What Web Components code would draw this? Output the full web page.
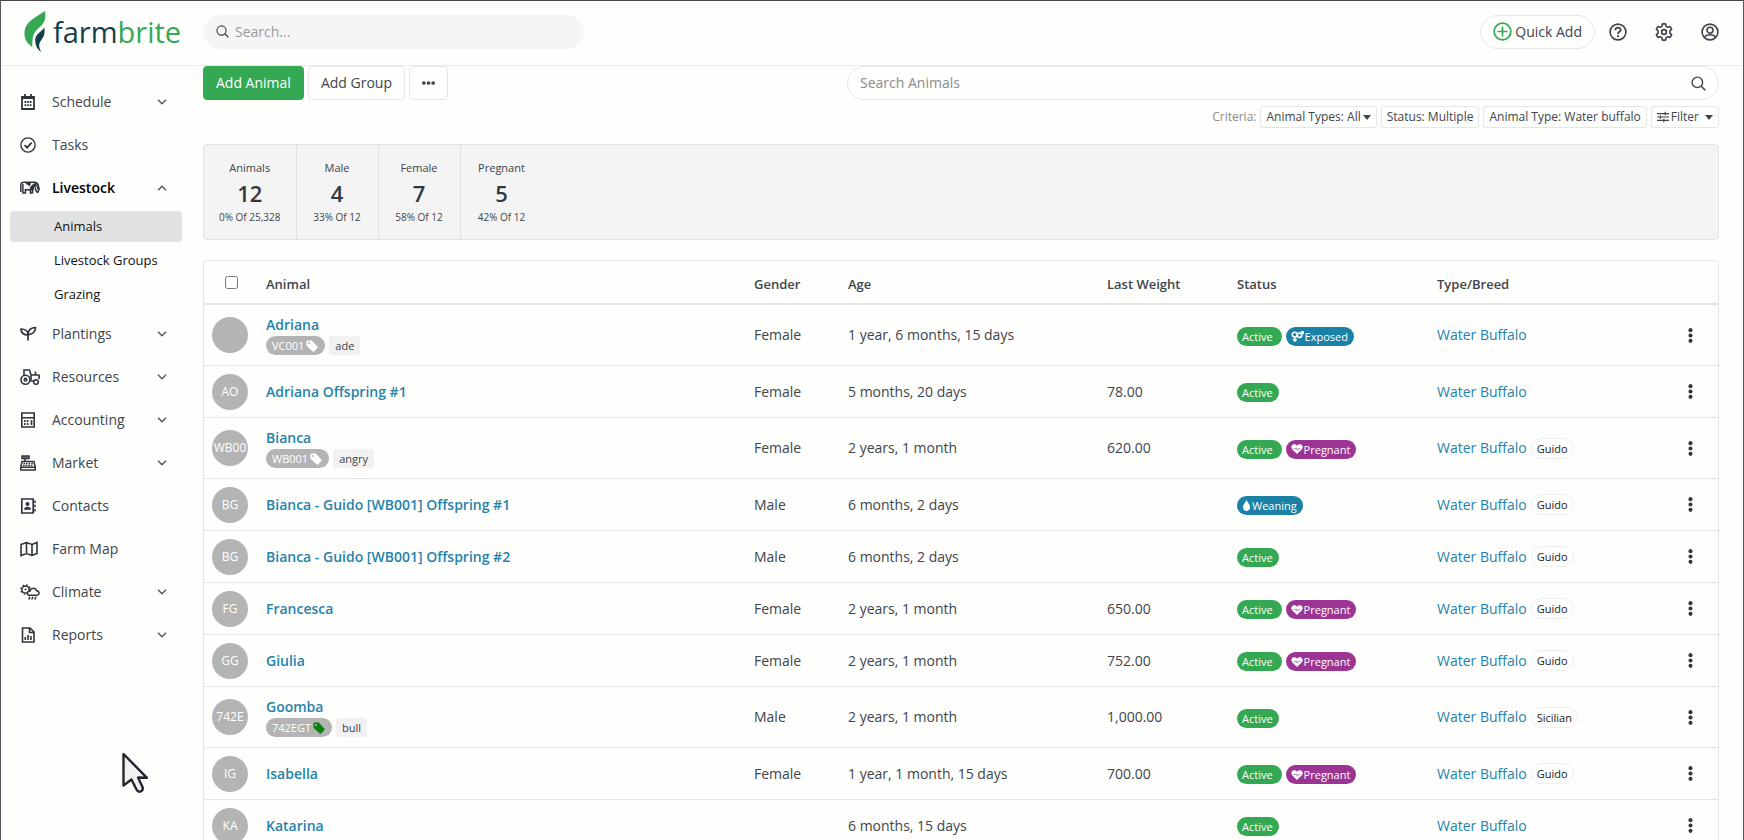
<!DOCTYPE html>
<html lang="en">
<head>
<meta charset="utf-8">
<title>Animals - Farmbrite</title>
<style>
  body { margin: 0; font: 14px/20px "Open Sans", "Noto Sans", sans-serif; color: #40454c; background: #fefefd; }
</style>
</head>
<body>
<farm-app></farm-app>
<script>
const ICONS = {
  search: ['0 0 16 16', '<g fill="none" stroke="currentColor"><circle cx="6.8" cy="6.8" r="5.6" stroke-width="1.5"/><path d="M10.9 10.900l4.300 4.300" stroke-width="1.700"/></g>'],
  plus: ['0 0 20 20', '<g fill="none" stroke="currentColor" stroke-width="1.8" stroke-linecap="round"><circle cx="10" cy="10" r="8.8"/><path d="M10 5.6v8.8M5.6 10h8.8"/></g>'],
  help: ['0 0 20 20', '<g fill="none" stroke="currentColor" stroke-width="1.8"><circle cx="10" cy="10" r="8.8"/><path d="M7 8c0-3.7 6-3.7 6-.2 0 2.100-3 2-3 4.300" stroke-width="2"/></g><circle cx="10" cy="14.600" r="1.200" fill="currentColor"/>'],
  gear: ['0 0 20 20', '<g fill="none" stroke="currentColor" stroke-width="1.800" stroke-linejoin="round"><path d="M8.200 1h3.600l.6 2.700 1.700 1 2.600-.8 1.800 3.100-2 1.900v2.200l2 1.900-1.800 3.100-2.600-.8-1.700 1-.6 2.700H8.200l-.6-2.700-1.700-1-2.600.8-1.800-3.100 2-1.900V8.900l-2-1.900 1.800-3.100 2.600.8 1.700-1z"/><circle cx="10" cy="10" r="2.700"/></g>'],
  user: ['0 0 20 20', '<g fill="none" stroke="currentColor" stroke-width="1.800"><circle cx="10" cy="10" r="8.800"/><circle cx="10" cy="8" r="3.300"/><path d="M4 16c1-2.300 3-3 6-3s5 .7 6 3"/></g>'],
  down: ['0 0 10 6', '<path d="M1 .8l4 4 4-4" fill="none" stroke="currentColor" stroke-width="1.400"/>'],
  up: ['0 0 10 6', '<path d="M1 5.200l4-4 4 4" fill="none" stroke="currentColor" stroke-width="1.400"/>'],
  caret: ['0 0 8 5', '<path d="M0 0h8L4 5z" fill="currentColor"/>'],
  sliders: ['0 0 14 12', '<path d="M0 2h14M0 6h14M0 10h14M9.500 0v4M4 4v4M8 8v4" fill="none" stroke="currentColor" stroke-width="1.300"/>'],
  dots: ['0 0 14 4', '<g fill="currentColor"><circle cx="2" cy="2" r="2"/><circle cx="7" cy="2" r="2"/><circle cx="12" cy="2" r="2"/></g>'],
  kebab: ['0 0 4 14', '<g fill="currentColor"><circle cx="2" cy="2" r="1.900"/><circle cx="2" cy="7" r="1.900"/><circle cx="2" cy="12" r="1.900"/></g>'],
  tag: ['0 0 12 12', '<path d="M.5 1.500v4.300L6.700 11.600c.4.4.9.4 1.300 0l3.500-3.500c.4-.4.4-.9 0-1.300L5.800.5H1.500z" fill="currentColor"/><circle cx="3" cy="3" r="1" fill="#b4b4b4"/>'],
  mates: ['0 0 14 12', '<g fill="none" stroke="currentColor" stroke-width="1.700"><circle cx="4" cy="4" r="2.700"/><circle cx="9.200" cy="4.700" r="2.400"/><path d="M4 6.700V12M1.800 9.600h4.400M11 3l2-2M10.500.9H13.200V3.500"/></g>'],
  heart: ['0 0 14 12', '<path d="M7 12L1.200 6.200C-2 2.500 3-2 7 2c4-4 9 .5 5.800 4.200z" fill="currentColor"/><path d="M3 5.500h2l1-1 1.500 3 1.200-2h2" fill="none" stroke="#9c3494" stroke-width=".8"/>'],
  drop: ['0 0 10 12', '<path d="M5 0c1 3 4 4.800 4 7.800C9 10.300 7.200 12 5 12S1 10.300 1 7.800C1 4.800 4 3 5 0z" fill="currentColor"/>'],
  schedule: ['0 0 20 16', '<path d="M2 3h12v12H2zM2 4h12M5 0v3M11 0v3" fill="none" stroke="currentColor" stroke-width="1.800"/><path d="M4.500 8h7M4.500 11.200h7" stroke="currentColor" stroke-width="1.800" stroke-dasharray="1.700 .95"/>'],
  tasks: ['0 0 20 16', '<g fill="none" stroke="currentColor"><circle cx="8" cy="8" r="7.100" stroke-width="1.400"/><path d="M4.600 8.200l2.500 2.500L11.700 5.500" stroke-width="1.800"/></g>'],
  livestock: ['0 0 20 16', '<path d="M.8 12V5.500C.8 3.500 2 2.300 4 2.300h10.500c2 0 3.300 1.200 3.800 3.200l1 4.500M2.900 4v9h2.500V9.800h5V13h2V9" fill="none" stroke="currentColor" stroke-width="1.500"/><path d="M5.500 2.500c.5 2.500 2 1.500 3 3s2 .5 2.500-3zM9.500 8l2.500-3 3.500-2.500L19.500 9.500 18.800 12.500 17 13.200 15 10.500 14.500 6.500 13 12z" fill="currentColor"/><path d="M15.800 6l1.700 5" stroke="#fefefd" stroke-width="1"/>'],
  plantings: ['0 0 20 16', '<path d="M8 14.500V8.500C8 5 5 3 1 3c0 4 3 6 7 6M8 8.500C8 4 11 1.500 15.500 1.500 15.500 6 12 8.300 8.300 8.600" fill="none" stroke="currentColor" stroke-width="1.700"/>'],
  resources: ['0 0 20 16', '<g fill="none" stroke="currentColor" stroke-width="1.600"><circle cx="5.500" cy="10.700" r="4.500"/><circle cx="5.500" cy="10.700" r="1.300"/><circle cx="16" cy="13" r="2.300"/><path d="M4 6V1h5.500l1.500 5h7.500q1 0 .8 1.500L18.800 10M10.500 12h3.200M11 6v5M15.500 6V2.500"/></g>'],
  accounting: ['0 0 20 16', '<path d="M1.800 1h12.400v14H1.800zM2 5.700h12" fill="none" stroke="currentColor" stroke-width="1.600"/><path d="M4 9h5.500M4 12h5.500" stroke="currentColor" stroke-width="1.800" stroke-dasharray="1.600 1.200"/><path d="M11.500 8.200v4.700" stroke="currentColor" stroke-width="1.800"/>'],
  market: ['0 0 20 16', '<path d="M2 1h7v2.500H2zM5 4v2M2 6.500h12l1.200 5.500v3H.8v-3zM1 12.200h14" fill="none" stroke="currentColor" stroke-width="1.500"/><path d="M2 1h7v2.500H2z" fill="currentColor" opacity=".6"/><path d="M3.500 8.500h9.500M3 10.500h10" stroke="currentColor" stroke-width="1.300" stroke-dasharray="1.600 1"/>'],
  contacts: ['0 0 20 16', '<path d="M1.800 1h11.400v14H1.800z" fill="none" stroke="currentColor" stroke-width="1.700"/><path d="M15 2.500v2.500M15 6.800v2.500M15 11v2.500" stroke="currentColor" stroke-width="1.500"/><circle cx="7.500" cy="6" r="2" fill="currentColor"/><path d="M4 11.700c0-3.800 7-3.800 7 0z" fill="currentColor"/>'],
  map: ['0 0 20 16', '<path d="M1 3.500l5.500-2 5.500 2 5-2v11l-5 2-5.500-2-5.500 2zM6.500 1.700v11M12 3.500v11" fill="none" stroke="currentColor" stroke-width="1.600"/>'],
  climate: ['0 0 20 16', '<g fill="none" stroke="currentColor" stroke-width="1.500"><circle cx="5.500" cy="5.500" r="3.600"/><circle cx="5.500" cy="5.500" r="4.700" stroke-width="1.300" stroke-dasharray="1.700 1.990"/><path d="M9 11.300c-2.500-1-2-4 .8-4C10.500 3.500 15.500 3.500 16.500 6.700c3.200.3 3.500 4 .5 4.600z" fill="#fefefd"/><path d="M10 12.700l-1.300 2.800M13 12.700l-1.300 2.800M16 12.700l-1.300 2.800"/></g><circle cx="5.500" cy="5.500" r="1" fill="currentColor"/>'],
  reports: ['0 0 20 16', '<path d="M2.500 1h7.500l4 4v10H2.500zM9.500 1v4.500H14" fill="none" stroke="currentColor" stroke-width="1.600"/><path d="M5.300 10v3M8.100 8v5M10.900 9v4" stroke="currentColor" stroke-width="1.600"/>']
};
const icon = (name, w, h) => `<svg viewBox="${ICONS[name][0]}" width="${w}" height="${h}" aria-hidden="true">${ICONS[name][1]}</svg>`;

const BASE = `
  *, *::before { box-sizing: border-box; }
  svg { display: block; flex: none; }
  button, input { font: inherit; color: inherit; margin: 0; }
  button { cursor: pointer; }
  a { text-decoration: none; color: inherit; }
`;
const define = (name, css, markup) => customElements.define(name, class extends HTMLElement {
  connectedCallback() {
    if (this.shadowRoot) return;
    this.attachShadow({ mode: 'open' }).innerHTML =
      `<style>${BASE}${css}</style>${typeof markup === 'function' ? markup(this) : markup}`;
  }
});

define('farm-logo', `
  :host { display: block; }
  a { display: flex; align-items: center; gap: 7px; font-size: 29px; line-height: 40px; font-weight: 500; color: #143f4b; }
  b { font-weight: 500; color: #34a853; }
`, `<a href="#" aria-label="farmbrite home">
  <svg viewBox="0 0 22 42" width="22" height="42"><path d="M21 0C22 7 21 11 17 15 11 20 9 23 8.500 29l-.3 7C3 32 0 28 .5 21 1 11 12 6 21 0z" fill="#34a853"/><path d="M20.300 16.500c1 7-1 10-3.300 13-2.500 3.500-2.500 7 .5 11.500-4-2.500-6-6-6.300-11.500C11 23 17 21.500 20.300 16.500z" fill="#143f4b"/></svg>
  <span>farm<b>brite</b></span></a>`);

define('farm-header', `
  :host { display: flex; align-items: center; height: 65px; padding: 0 24px 3px 23px; border-bottom: 1px solid #ececf0; flex: none; }
  farm-logo { width: 180px; }
  .search { display: flex; align-items: center; gap: 6px; width: 380px; height: 34px; padding: 0 12px; border-radius: 17px; background: #f5f5f5; }
  .search input { flex: 1; min-width: 0; border: 0; outline: 0; background: none; padding: 0; }
  input::placeholder { color: #9b9b9b; opacity: 1; }
  nav { display: flex; align-items: center; margin-left: auto; gap: 28px; }
  nav button { border: 0; background: none; padding: 0; }
  nav .quick { display: flex; align-items: center; gap: 3px; height: 34px; padding: 0 12px; border: 1px solid #e8e8ec; border-radius: 17px; margin-right: -14px; }
  .quick svg { color: #34a853; }
`, `<farm-logo></farm-logo>
  <label class="search">${icon('search', 13, 13)}<input type="search" placeholder="Search..." aria-label="Search"></label>
  <nav>
    <button class="quick">${icon('plus', 19, 19)}Quick Add</button>
    <button aria-label="Help">${icon('help', 18, 18)}</button>
    <button aria-label="Settings">${icon('gear', 18, 18)}</button>
    <button aria-label="Account">${icon('user', 18, 18)}</button>
  </nav>`);

define('farm-nav-item', `
  :host { display: block; }
  a { display: flex; align-items: center; height: 43px; padding: 0 15px 0 10px; }
  .label { flex: 1; margin-left: 12px; }
  a > svg { color: #2f343c; }
  :host([open]) a { color: #000; font-weight: 600; }
  .chev { color: #555; }
`, el => `<a href="#">${icon(el.getAttribute('icon'), 20, 16)}<span class="label"><slot></slot></span>${
    el.hasAttribute('menu') ? `<span class="chev">${icon(el.hasAttribute('open') ? 'up' : 'down', 10, 6)}</span>` : ''}</a>`);

define('farm-nav-sub', `
  :host { display: block; }
  a { display: block; padding: 5px 0 5px 44px; line-height: 21px; font-size: 13px; color: #111; border-radius: 4px; }
  :host([current]) a { background: #e2e2e2; }
`, `<a href="#"><slot></slot></a>`);

define('farm-sidebar', `
  :host { display: block; width: 192px; flex: none; padding: 14px 11px 0 9px; }
  .subs { display: grid; gap: 3px; padding: 2px 0; }
`, `<nav>
  <farm-nav-item icon="schedule" menu>Schedule</farm-nav-item>
  <farm-nav-item icon="tasks">Tasks</farm-nav-item>
  <farm-nav-item icon="livestock" menu open>Livestock</farm-nav-item>
  <div class="subs">
    <farm-nav-sub current>Animals</farm-nav-sub>
    <farm-nav-sub>Livestock Groups</farm-nav-sub>
    <farm-nav-sub>Grazing</farm-nav-sub>
  </div>
  <farm-nav-item icon="plantings" menu>Plantings</farm-nav-item>
  <farm-nav-item icon="resources" menu>Resources</farm-nav-item>
  <farm-nav-item icon="accounting" menu>Accounting</farm-nav-item>
  <farm-nav-item icon="market" menu>Market</farm-nav-item>
  <farm-nav-item icon="contacts">Contacts</farm-nav-item>
  <farm-nav-item icon="map">Farm Map</farm-nav-item>
  <farm-nav-item icon="climate" menu>Climate</farm-nav-item>
  <farm-nav-item icon="reports" menu>Reports</farm-nav-item>
</nav>`);

define('farm-toolbar', `
  :host { display: flex; justify-content: space-between; align-items: flex-start; }
  .actions { display: flex; gap: 4px; }
  button { display: flex; align-items: center; height: 34px; padding: 0 12px; border: 1px solid #e6e6ea; border-radius: 4px; background: #fefefd; }
  .primary { background: #34a853; border-color: #34a853; color: #fff; }
  .find { width: 872px; max-width: 58%; }
  .box { display: flex; align-items: center; height: 34px; padding: 0 12px; border: 1px solid #e6e6ea; border-radius: 17px; }
  .box input { flex: 1; min-width: 0; border: 0; outline: 0; background: none; padding: 0; }
  input::placeholder { color: #8c8c8c; opacity: 1; }
  .criteria { display: flex; justify-content: flex-end; align-items: center; gap: 4px; margin-top: 6px; font-size: 12px; color: #8a8a8a; }
  .criteria button { height: 22px; padding: 0 5px; gap: 2px; border-radius: 3px; color: #40454c; white-space: nowrap; }
  .criteria .filter { gap: 6px; }
  .filter span { display: flex; align-items: center; gap: 2px; }
`, `<div class="actions">
    <button class="primary">Add Animal</button>
    <button>Add Group</button>
    <button aria-label="More actions">${icon('dots', 13, 4)}</button>
  </div>
  <div class="find">
    <label class="box"><input type="search" placeholder="Search Animals" aria-label="Search Animals">${icon('search', 15, 15)}</label>
    <div class="criteria"><span>Criteria:</span>
      <button>Animal Types: All ${icon('caret', 8, 5)}</button>
      <button>Status: Multiple</button>
      <button>Animal Type: Water buffalo</button>
      <button class="filter"><span>${icon('sliders', 12, 12)}Filter</span>${icon('caret', 8, 5)}</button>
    </div>
  </div>`);

define('farm-stat', `
  :host { display: flex; flex-direction: column; align-items: center; padding: 13px 15px 0; min-width: 82px; border-right: 1px solid #e2e2e4; font-size: 11px; white-space: nowrap; }
  :host(:last-child) { border-right: 0; }
  strong { font-size: 22px; line-height: 30px; font-weight: 600; color: #33383e; }
  small { font-size: 10px; line-height: 18px; }
`, el => `<span><slot></slot></span><strong>${el.getAttribute('value')}</strong><small>${el.getAttribute('share')}</small>`);

define('farm-stats', `
  :host { display: flex; height: 96px; margin: 16px 0 20px; background: #f4f4f4; border: 1px solid #e2e2e4; border-radius: 4px; }
`, `<slot></slot>`);

define('farm-badge', `
  :host { display: inline-flex; align-items: center; gap: 1px; height: 19px; padding: 0 6px 0 5px; border-radius: 10px; background: #34a853; color: #fff; font-size: 11px; line-height: 19px; white-space: nowrap; }
  :host([kind=active]:not(:last-child)) { padding-right: 9px; }
  :host([kind=exposed]), :host([kind=weaning]) { background: #1b82a6; }
  :host([kind=pregnant]) { background: #9c3494; }
  :host([kind=tag]) { background: #b4b4b4; padding: 0 7px 0 6px; gap: 2px; }
  :host([kind=tag]) svg { color: var(--tag-color, #fff); }
  :host([kind=note]) { background: #f1f1f1; color: #40454c; border-radius: 3px; padding: 0 6px; }
  :host([kind=breed]) { background: none; color: #222; border: 1px solid #efeff3; padding: 0 5px; height: 21px; }
`, el => {
  const k = el.getAttribute('kind');
  const lead = { exposed: icon('mates', 13, 11), pregnant: icon('heart', 12, 10), weaning: icon('drop', 9, 11) }[k] || '';
  return `${lead}<slot></slot>${k === 'tag' ? icon('tag', 12, 12) : ''}`;
});

const ANIMALS = [
  { av: '', name: 'Adriana', tag: 'VC001', note: 'ade', sex: 'Female', age: '1 year, 6 months, 15 days', kg: '', st: ['Active', 'Exposed'] },
  { av: 'AO', name: 'Adriana Offspring #1', sex: 'Female', age: '5 months, 20 days', kg: '78.00', st: ['Active'] },
  { av: 'WB00', name: 'Bianca', tag: 'WB001', note: 'angry', sex: 'Female', age: '2 years, 1 month', kg: '620.00', st: ['Active', 'Pregnant'], breed: 'Guido' },
  { av: 'BG', name: 'Bianca - Guido [WB001] Offspring #1', sex: 'Male', age: '6 months, 2 days', kg: '', st: ['Weaning'], breed: 'Guido' },
  { av: 'BG', name: 'Bianca - Guido [WB001] Offspring #2', sex: 'Male', age: '6 months, 2 days', kg: '', st: ['Active'], breed: 'Guido' },
  { av: 'FG', name: 'Francesca', sex: 'Female', age: '2 years, 1 month', kg: '650.00', st: ['Active', 'Pregnant'], breed: 'Guido' },
  { av: 'GG', name: 'Giulia', sex: 'Female', age: '2 years, 1 month', kg: '752.00', st: ['Active', 'Pregnant'], breed: 'Guido' },
  { av: '742E', name: 'Goomba', tag: '742EGT', tagColor: '#0c800c', note: 'bull', sex: 'Male', age: '2 years, 1 month', kg: '1,000.00', st: ['Active'], breed: 'Sicilian' },
  { av: 'IG', name: 'Isabella', sex: 'Female', age: '1 year, 1 month, 15 days', kg: '700.00', st: ['Active', 'Pregnant'], breed: 'Guido' },
  { av: 'KA', name: 'Katarina', sex: '', age: '6 months, 15 days', kg: '', st: ['Active'] }
];

define('farm-animal-table', `
  :host { display: block; border: 1px solid #e4e4e8; border-radius: 4px 4px 0 0; }
  table { width: 100%; table-layout: fixed; border-collapse: separate; border-spacing: 0; }
  th, td { padding: 0 8px; text-align: left; vertical-align: middle; border-bottom: 1px solid #e4e4e8; }
  th { height: 44px; border-bottom-width: 2px; font-size: 13px; font-weight: 600; padding-top: 3px; }
  th:first-child { text-align: center; padding-top: 0; }
  td { height: 52px; }
  .tagged td { height: 61px; }
  .pick { width: 54px; } .sex { width: 94px; } .age { width: 259px; } .kg { width: 130px; }
  .st { width: 200px; } .type { width: 247px; } .more { width: 42px; }
  input { display: block; width: 13px; height: 13px; margin: 0 auto; }
  .avatar { display: grid; place-content: center; width: 36px; height: 36px; border-radius: 50%; background: #b4b4b4; color: #fff; font-size: 12px; overflow: hidden; }
  .name { color: #2583ab; font-weight: 600; }
  .type-link { color: #2583ab; }
  .line { display: flex; align-items: center; gap: 4px; }
  .tags { margin-top: 1px; }
  .status { padding-top: 2px; }
  button { display: block; border: 0; background: none; padding: 4px; color: #33383e; }
`, `<table>
  <colgroup><col class="pick"><col><col class="sex"><col class="age"><col class="kg"><col class="st"><col class="type"><col class="more"></colgroup>
  <thead><tr><th><input type="checkbox" aria-label="Select all animals"></th><th>Animal</th><th>Gender</th><th>Age</th><th>Last Weight</th><th>Status</th><th>Type/Breed</th><th></th></tr></thead>
  <tbody>${ANIMALS.map(a => `<tr class="${a.tag ? 'tagged' : ''}">
    <td><span class="avatar">${a.av}</span></td>
    <td><a class="name" href="#">${a.name}</a>${a.tag ? `<div class="line tags"><farm-badge kind="tag"${a.tagColor ? ` style="--tag-color:${a.tagColor}"` : ''}>${a.tag}</farm-badge><farm-badge kind="note">${a.note}</farm-badge></div>` : ''}</td>
    <td>${a.sex}</td><td>${a.age}</td><td>${a.kg}</td>
    <td><div class="line status">${a.st.map(s => `<farm-badge kind="${s.toLowerCase()}">${s}</farm-badge>`).join('')}</div></td>
    <td><div class="line"><a class="type-link" href="#">Water Buffalo</a>${a.breed ? `<farm-badge kind="breed">${a.breed}</farm-badge>` : ''}</div></td>
    <td><button aria-label="Actions">${icon('kebab', 5, 15)}</button></td>
  </tr>`).join('')}</tbody></table>`);

define('farm-pointer', `
  :host { position: absolute; left: 120px; top: 750px; pointer-events: none; }
`, `<svg viewBox="0 0 30 44" width="30" height="44"><path d="M3.500 4v31.500l8-6 5 10c2 4 7.500 2 6-2.500L18 27.500l9 .3z" fill="#f1f1f1" stroke="#23262f" stroke-width="2.400" stroke-linejoin="round"/></svg>`);

define('farm-app', `
  :host { display: flex; flex-direction: column; box-sizing: border-box; height: 100vh; overflow: hidden; border: 1px solid #55585c; border-top-color: #444; border-bottom: 0; }
  .body { display: flex; flex: 1; min-height: 0; }
  main { flex: 1; min-width: 0; padding: 0 24px 0 10px; overflow: hidden; }
`, `<farm-header></farm-header>
  <div class="body"><farm-sidebar></farm-sidebar>
    <main>
      <farm-toolbar></farm-toolbar>
      <farm-stats>
        <farm-stat value="12" share="0% Of 25,328">Animals</farm-stat>
        <farm-stat value="4" share="33% Of 12">Male</farm-stat>
        <farm-stat value="7" share="58% Of 12">Female</farm-stat>
        <farm-stat value="5" share="42% Of 12">Pregnant</farm-stat>
      </farm-stats>
      <farm-animal-table></farm-animal-table>
    </main>
  </div>
  <farm-pointer></farm-pointer>`);
</script>
</body>
</html>
